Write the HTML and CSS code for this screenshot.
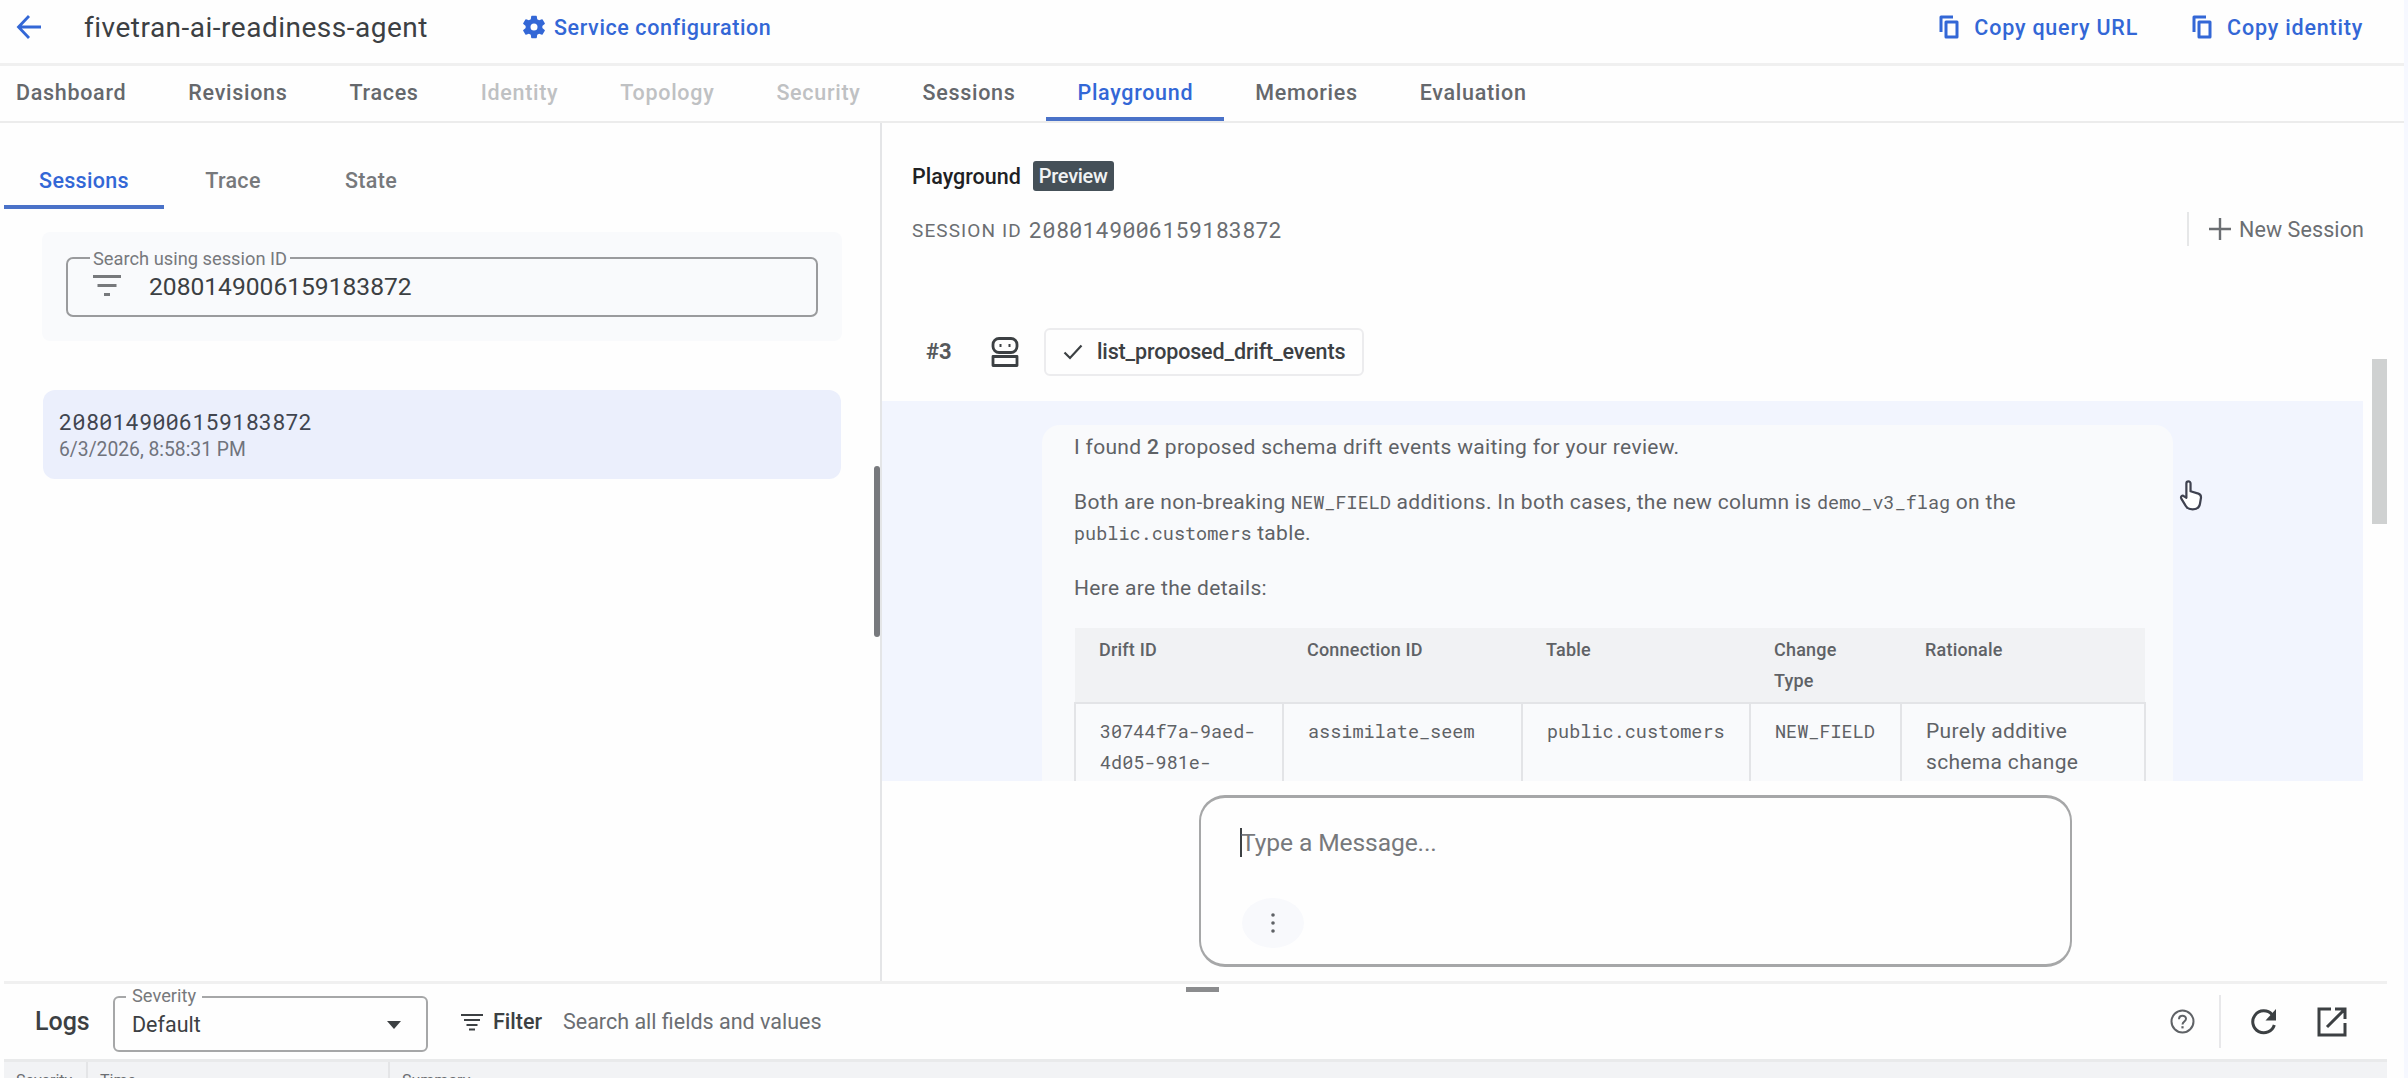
FILE: index.html
```html
<!DOCTYPE html>
<html lang="en">
<head>
    <meta charset="UTF-8">
    <meta name="viewport" content="width=device-width, initial-scale=1.0">
    <title>fivetran-ai-readiness-agent</title>
    <link rel="stylesheet" href="styles.css">
</head>
<body>
    <header class="header">
        <svg class="back" width="26" height="26" viewBox="0 0 26 26"><path d="M25 13H3M13 2 2.5 13 13 24" fill="none" stroke="currentColor" stroke-width="2.8"/></svg>
        <h1>fivetran-ai-readiness-agent</h1>
        <a class="link config">
            <svg width="28" height="28" viewBox="0 0 24 24"><path fill="currentColor" d="M19.14 12.94c.04-.3.06-.61.06-.94 0-.32-.02-.64-.07-.94l2.03-1.58a.49.49 0 0 0 .12-.61l-1.92-3.32a.49.49 0 0 0-.59-.22l-2.39.96a7 7 0 0 0-1.62-.94l-.36-2.54a.48.48 0 0 0-.48-.41h-3.84a.47.47 0 0 0-.47.41l-.36 2.54c-.59.24-1.13.57-1.62.94l-2.39-.96a.48.48 0 0 0-.59.22L2.74 8.87a.47.47 0 0 0 .12.61l2.03 1.58c-.05.3-.09.63-.09.94s.02.64.07.94l-2.03 1.58a.49.49 0 0 0-.12.61l1.92 3.32c.12.22.37.29.59.22l2.39-.96c.5.38 1.03.7 1.62.94l.36 2.54c.05.24.24.41.48.41h3.84c.24 0 .44-.17.47-.41l.36-2.54c.59-.24 1.13-.56 1.62-.94l2.39.96c.22.08.47 0 .59-.22l1.92-3.32a.47.47 0 0 0-.12-.61l-2.01-1.58zM12 15a3 3 0 1 1 0-6 3 3 0 0 1 0 6z"/></svg>
            <span>Service configuration</span>
        </a>
        <div class="header-actions">
            <a class="link copy">
                <svg width="21" height="24" viewBox="0 0 21 24"><path d="M2 17V2H14M7 7h11v15H7z" fill="none" stroke="currentColor" stroke-width="3" stroke-linejoin="round"/></svg>
                <span>Copy query URL</span>
            </a>
            <a class="link copy">
                <svg width="21" height="24" viewBox="0 0 21 24"><path d="M2 17V2H14M7 7h11v15H7z" fill="none" stroke="currentColor" stroke-width="3" stroke-linejoin="round"/></svg>
                <span>Copy identity</span>
            </a>
        </div>
    </header>

    <nav class="tabs">
        <div class="tab">Dashboard</div>
        <div class="tab">Revisions</div>
        <div class="tab">Traces</div>
        <div class="tab disabled">Identity</div>
        <div class="tab disabled">Topology</div>
        <div class="tab disabled">Security</div>
        <div class="tab">Sessions</div>
        <div class="tab active">Playground</div>
        <div class="tab">Memories</div>
        <div class="tab">Evaluation</div>
    </nav>

    <main class="main">
        <aside class="sidebar">
            <div class="subtabs">
                <div class="subtab active">Sessions</div>
                <div class="subtab">Trace</div>
                <div class="subtab">State</div>
            </div>
            <div class="search-card">
                <div class="search-box">
                    <span class="field-label">Search using session ID</span>
                    <svg width="28" height="24" viewBox="0 0 28 24"><path d="M0 2.5h28M4.500 11.5h19M11 20.5h6" stroke="currentColor" stroke-width="3"/></svg>
                    <span class="search-value">2080149006159183872</span>
                </div>
            </div>
            <div class="session">
                <div class="session-id">2080149006159183872</div>
                <div class="session-date">6/3/2026, 8:58:31 PM</div>
            </div>
            <div class="side-thumb"></div>
        </aside>

        <section class="playground">
            <div class="play-title">
                <span>Playground</span>
                <span class="badge">Preview</span>
            </div>
            <div class="play-session">
                <span class="caption">SESSION ID</span>
                <span class="id">2080149006159183872</span>
                <div class="new-session">
                    <svg width="22" height="22" viewBox="0 0 22 22"><path d="M11 0v22M0 11h22" stroke="currentColor" stroke-width="2.4"/></svg>
                    <span>New Session</span>
                </div>
            </div>

            <div class="conversation">
                <div class="event">
                    <span class="event-num">#3</span>
                    <svg class="bot" width="28" height="30" viewBox="0 0 28 30"><g fill="none" stroke="currentColor" stroke-width="2.8"><rect x="2" y="1.5" width="24" height="14" rx="6"/><path d="M2 19.5h24v9H2z" stroke-linejoin="round"/></g><path d="M9.5 7v3M18.5 7v3" stroke="currentColor" stroke-width="2"/></svg>
                    <div class="chip">
                        <svg width="20" height="16" viewBox="0 0 20 16"><path d="M1.5 8.5 7 14 18.5 1.5" fill="none" stroke="currentColor" stroke-width="2.2"/></svg>
                        <span>list_proposed_drift_events</span>
                    </div>
                </div>
                <div class="answer">
                    <div class="bubble">
                        <p>I found <b>2</b> proposed schema drift events waiting for your review.</p>
                        <p>Both are non-breaking <code>NEW_FIELD</code> additions. In both cases, the new column is <code>demo_v3_flag</code> on the<br><code>public.customers</code> table.</p>
                        <p>Here are the details:</p>
                        <table>
                            <colgroup>
                                <col class="c-drift"><col class="c-conn"><col class="c-table"><col class="c-type"><col class="c-why">
                            </colgroup>
                            <thead>
                                <tr><th>Drift ID</th><th>Connection ID</th><th>Table</th><th>Change Type</th><th>Rationale</th></tr>
                            </thead>
                            <tbody>
                                <tr>
                                    <td><code>30744f7a-9aed-<br>4d05-981e-</code></td>
                                    <td><code>assimilate_seem</code></td>
                                    <td><code>public.customers</code></td>
                                    <td><code>NEW_FIELD</code></td>
                                    <td>Purely additive<br>schema change</td>
                                </tr>
                            </tbody>
                        </table>
                    </div>
                    <svg class="pointer" width="24" height="32" viewBox="0 0 26 34"><path d="M8 20V4.500a2.200 2.200 0 0 1 4.500 0V13l8.500 2.500c2.200.8 3 2 2.800 4.500l-1 6c-.5 4-3.500 6.500-8 6.500-4 0-6.500-1.500-8-4.500L2.500 21c-1-2.500 1-4.500 3-2.500z" fill="#fff" stroke="#3f4250" stroke-width="2.400" stroke-linejoin="round"/></svg>
                </div>
            </div>
            <div class="scroll-thumb"></div>

            <div class="composer">
                <div class="placeholder">Type a Message...</div>
                <button class="more"><svg width="6" height="22" viewBox="0 0 6 22"><g fill="currentColor"><circle cx="3" cy="3" r="1.800"/><circle cx="3" cy="11" r="1.800"/><circle cx="3" cy="19" r="1.800"/></g></svg></button>
            </div>
        </section>
    </main>

    <footer class="logs">
        <div class="handle"></div>
        <div class="logs-bar">
            <h2>Logs</h2>
            <div class="select">
                <span class="field-label">Severity</span>
                <span>Default</span>
                <svg width="14" height="8" viewBox="0 0 16 8" preserveAspectRatio="none"><path d="M0 0h16L8 8z" fill="currentColor"/></svg>
            </div>
            <svg class="filter-icon" width="22" height="18" viewBox="0 0 22 18"><path d="M0 2h22M3 7h16M5.500 12h11M8 16.500h6" stroke="currentColor" stroke-width="2.200"/></svg>
            <b class="filter">Filter</b>
            <span class="filter-hint">Search all fields and values</span>
            <div class="logs-actions">
                <svg class="help" width="25" height="25" viewBox="0 0 25 25"><g fill="none" stroke="currentColor" stroke-width="2"><circle cx="12.500" cy="12.500" r="11"/><path d="M9 10.300c0-4.800 7-4.500 7-.5 0 2.700-3.500 2.700-3.500 5.700"/></g><path d="M11.400 17.200h2.200v2.200h-2.200z" fill="currentColor"/></svg>
                <i class="divider"></i>
                <svg class="refresh" width="26" height="26" viewBox="0 0 26 26"><path d="M23.300 16A11 11 0 1 1 21 5.500" fill="none" stroke="currentColor" stroke-width="3"/><path d="M25 0v11.500H14.500z" fill="currentColor"/></svg>
                <svg width="30" height="30" viewBox="0 0 30 30"><path d="M14 2H2v26h26V16M18 2h10v10M27 3 10 20" fill="none" stroke="currentColor" stroke-width="3"/></svg>
            </div>
        </div>
        <div class="logs-head">
            <span>Severity</span>
            <span>Time</span>
            <span>Summary</span>
        </div>
    </footer>
</body>
</html>
```
FILE: styles.css
```css
:root {
    --blue: #3367d6;
    --text: #3c4043;
    --muted: #6b6e72;
    --line: #ececec;
    --mono: 'Roboto Mono', 'DejaVu Sans Mono', monospace;
}

* {
    margin: 0;
    padding: 0;
    box-sizing: border-box;
}

body {
    width: 2408px;
    height: 1078px;
    overflow: hidden;
    display: flex;
    flex-direction: column;
    font-family: Roboto, sans-serif;
    font-size: 21.5px;
    color: var(--text);
    background-color: #fefefe;
    border-right: 4px solid #f6f8ff;
}

svg {
    display: block;
    flex: none;
}

/* header */
.header {
    flex: none;
    height: 66px;
    padding: 0 41px 9px 16px;
    display: flex;
    align-items: center;
    border-bottom: 3px solid #f0f0f0;
    white-space: nowrap;
}

.back {
    color: var(--blue);
    margin-right: 42px;
}

h1 {
    width: 436px;
    font-size: 28px;
    font-weight: 400;
    letter-spacing: 0.5px;
}

.link {
    display: flex;
    align-items: center;
    color: var(--blue);
    font-weight: 500;
    letter-spacing: 0.6px;
}

.config svg {
    margin-right: 6px;
}

.header-actions {
    margin-left: auto;
    display: flex;
    gap: 54px;
}

.copy {
    letter-spacing: 0.8px;
}

.copy svg {
    margin-right: 14px;
}

/* main tabs */
.tabs {
    height: 57px;
    display: flex;
    border-bottom: 2px solid var(--line);
    margin-left: -15px;
    flex: none;
}

.tab {
    padding: 0 31px;
    line-height: 54px;
    height: 55px;
    font-weight: 500;
    letter-spacing: 0.7px;
    color: #65686c;
}

.tab.disabled {
    color: #bfc1c3;
}

.tab.active {
    color: var(--blue);
    border-bottom: 4px solid #4a72c8;
}

.main {
    display: flex;
    height: 858px;
    flex: none;
}

/* sessions panel */
.sidebar {
    position: relative;
    width: 882px;
    border-right: 2px solid #e4e5e7;
}

.subtabs {
    display: flex;
    height: 86px;
    padding: 31px 0 0 4px;
}

.subtab {
    width: 138px;
    line-height: 54px;
    text-align: center;
    font-weight: 500;
    letter-spacing: 0.3px;
    color: #77797c;
}

.subtab.active {
    width: 160px;
    color: var(--blue);
    border-bottom: 4px solid #4a72c8;
}

.search-card {
    margin: 23px 38px 0 42px;
    padding: 25px 24px 24px;
    border-radius: 8px;
    background-color: #f9fafc;
}

.search-box {
    position: relative;
    height: 60px;
    padding: 0 0 2px 25px;
    display: flex;
    align-items: center;
    border: 2px solid #9a9b9d;
    border-radius: 7px;
    color: #77797c;
}

.field-label {
    position: absolute;
    top: -11px;
    left: 22px;
    padding: 0 3px;
    font-size: 18.3px;
    line-height: 22px;
    color: #77797c;
    background-color: #f9fafc;
}

.search-value {
    margin-left: 28px;
    font-size: 24.6px;
    color: var(--text);
}

.session {
    margin: 49px 39px 0 43px;
    height: 89px;
    padding: 18px 16px;
    border-radius: 12px;
    background-color: #ebeffc;
}

.session-id {
    font-family: var(--mono);
    font-size: 22.2px;
    line-height: 28px;
    color: #41454f;
}

.session-date {
    font-size: 19.3px;
    line-height: 28px;
    color: #70737c;
}

.side-thumb {
    position: absolute;
    left: 874px;
    top: 343px;
    width: 6px;
    height: 171px;
    border-radius: 3px;
    background-color: #77797d;
}

/* playground */
.playground {
    position: relative;
    flex: 1;
    display: flex;
    flex-direction: column;
}

.play-title {
    display: flex;
    align-items: center;
    gap: 12px;
    height: 30px;
    margin: 38px 0 0 30px;
    font-weight: 500;
    color: #202124;
}

.badge {
    padding: 0 6px;
    font-size: 20px;
    letter-spacing: -0.3px;
    line-height: 30px;
    border-radius: 3px;
    color: #f1f3f4;
    background-color: #455058;
}

.play-session {
    display: flex;
    align-items: center;
    height: 34px;
    margin: 21px 40px 0 30px;
    color: var(--muted);
}

.caption {
    width: 117px;
    padding-top: 3px;
    font-size: 19px;
    letter-spacing: 1.1px;
}

.id {
    font-family: var(--mono);
    font-size: 22.2px;
}

.new-session {
    display: flex;
    align-items: center;
    gap: 8px;
    height: 34px;
    margin-left: auto;
    padding-left: 20px;
    border-left: 2px solid #e6e7e8;
    letter-spacing: 0.1px;
}

.conversation {
    width: 1481px;
    height: 535px;
    overflow: hidden;
}

.event {
    display: flex;
    align-items: center;
    height: 155px;
    padding: 56px 0 0 44px;
}

.event-num {
    width: 65px;
    font-size: 22px;
    font-weight: 700;
    color: #56595c;
}

.bot {
    margin-right: 25px;
}

.chip {
    display: flex;
    align-items: center;
    gap: 14px;
    width: 320px;
    height: 48px;
    padding-left: 17px;
    border: 2px solid #ececee;
    border-radius: 6px;
    font-weight: 500;
    letter-spacing: -0.15px;
    white-space: nowrap;
}

.answer {
    position: relative;
    height: 420px;
    padding: 24px 0 0 160px;
    background-color: #f2f5fe;
}

.bubble {
    width: 1131px;
    height: 420px;
    padding: 7px 0 0 32px;
    border-radius: 18px;
    background-color: #f9fafc;
    font-size: 21px;
    letter-spacing: 0.32px;
    line-height: 31px;
    color: #5f6266;
}

.bubble p {
    margin-bottom: 24px;
    white-space: nowrap;
}

.bubble b {
    font-weight: 500;
}

code {
    font-family: var(--mono);
    font-size: 18.5px;
    letter-spacing: 0;
    line-height: 1;
}

td code {
    line-height: inherit;
}

table {
    width: 1070px;
    table-layout: fixed;
    border-collapse: collapse;
}

.c-drift { width: 208px; }
.c-conn { width: 239px; }
.c-table { width: 228px; }
.c-type { width: 151px; }
.c-why { width: 244px; }

th {
    height: 75px;
    padding: 6px 24px;
    vertical-align: top;
    text-align: left;
    font-size: 18px;
    font-weight: 500;
    letter-spacing: 0.2px;
    background-color: #f1f2f4;
}

td {
    height: 120px;
    padding: 12px 0 0 24px;
    vertical-align: top;
    border: 2px solid #e3e4e7;
}

.pointer {
    position: absolute;
    left: 1297px;
    top: 78px;
}

.scroll-thumb {
    position: absolute;
    left: 1490px;
    top: 236px;
    width: 15px;
    height: 165px;
    background-color: #cfd1d1;
}

.composer {
    width: 873px;
    height: 172px;
    margin: 14px 0 0 317px;
    padding: 30px 39px;
    border: solid #a6a7a8;
    border-width: 3px 2px;
    border-radius: 26px;
}

.placeholder {
    height: 29px;
    line-height: 29px;
    font-size: 24.6px;
    letter-spacing: -0.1px;
    color: #77797c;
    border-left: 2px solid #3c4043;
    text-indent: -1px;
}

.more {
    display: flex;
    align-items: center;
    justify-content: center;
    width: 62px;
    height: 50px;
    margin: 41px 0 0 2px;
    border: none;
    border-radius: 50%;
    background-color: #f8f9fc;
    color: #5f6266;
}

/* logs */
.logs {
    position: relative;
    width: 2383px;
    margin-left: 4px;
    flex: 1;
    min-height: 0;
    border-top: 3px solid #f0f0f0;
}

.handle {
    position: absolute;
    left: 1182px;
    top: 3px;
    width: 33px;
    height: 5px;
    background-color: #8b8c8e;
}

.logs-bar {
    display: flex;
    align-items: center;
    height: 75px;
    padding: 0 40px 0 31px;
    white-space: nowrap;
}

h2 {
    width: 78px;
    font-size: 25px;
    font-weight: 500;
}

.select {
    position: relative;
    display: flex;
    align-items: center;
    justify-content: space-between;
    width: 315px;
    height: 56px;
    padding: 1px 25px 0 17px;
    margin-top: 5px;
    border: 2px solid #a6a7a8;
    border-radius: 6px;
}

.select .field-label {
    left: 11px;
    top: -13px;
    padding: 0 6px;
    background-color: #fefefe;
}

.filter-icon {
    margin-left: 33px;
}

.filter {
    margin-left: 10px;
    width: 70px;
    font-weight: 500;
}

.filter-hint {
    color: var(--muted);
}

.logs-actions {
    display: flex;
    align-items: center;
    margin-left: auto;
}

.help {
    color: #5f6266;
}

.divider {
    width: 2px;
    height: 53px;
    margin: 0 30px 0 24px;
    background-color: #e8e8ea;
}

.refresh {
    margin-right: 40px;
}

.logs-head {
    display: flex;
    border-top: 3px solid #e9eaeb;
    background-color: #f2f3f5;
    height: 40px;
    font-size: 16px;
    line-height: 38px;
    color: var(--muted);
}

.logs-head span {
    padding-left: 12px;
}

.logs-head span + span {
    border-left: 2px solid #e4e5e7;
}

.logs-head span:nth-child(1) { width: 82px; }
.logs-head span:nth-child(2) { width: 302px; }
```
